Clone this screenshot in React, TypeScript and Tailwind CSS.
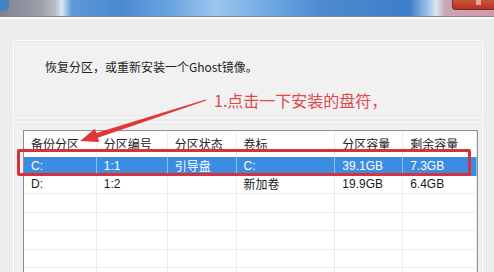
import React from "react";

const cols = [73, 71, 69, 99, 68, 74];
const headers = ["备份分区", "分区编号", "分区状态", "卷标", "分区容量", "剩余容量"];
const rows: string[][] = [
  ["C:", "1:1", "引导盘", "C:", "39.1GB", "7.3GB"],
  ["D:", "1:2", "", "新加卷", "19.9GB", "6.4GB"],
  ["", "", "", "", "", ""],
  ["", "", "", "", "", ""],
  ["", "", "", "", "", ""],
  ["", "", "", "", "", ""],
  ["", "", "", "", "", ""],
];

export default function App() {
  return (
    <div
      className="relative w-[494px] h-[272px] overflow-hidden bg-[#ededed] text-[#1a1a1a]"
      style={{ fontFamily: '"Liberation Sans", "Noto Sans CJK SC", sans-serif' }}
    >
      {/* title bar */}
      <div className="relative h-[17px] bg-[linear-gradient(90deg,#7e8290_0px,#9c9ea8_40px,#b8bcc6_55px,#d6e6f4_62px,#5d9ad8_72px,#4a88d0_120px,#6aa4e0_170px,#9cc6ee_215px,#74aee4_260px,#4d8ad0_320px,#3f7ec8_410px,#9cc4ea_428px,#dde8f2_436px,#c9a4b6_445px,#d09ab0_494px)] border-b border-[#7d8a9a]">
        <div className="absolute left-0 top-0 w-[9px] h-[11px] rounded-br-[6px] bg-[#3f83c8]" />
        <div className="absolute left-[452px] -top-[2px] w-[44px] h-[12px] rounded-[3px] border border-[#7a2a20] bg-[linear-gradient(180deg,#c85a40,#b8301e)]">
          <div className="absolute left-[23px] top-[1px] w-[5px] h-[5px] bg-[#f0d0c0] opacity-70" />
        </div>
      </div>
      <div className="h-[2px] bg-[#fbfbfb]" />

      {/* top panel */}
      <div className="mt-[21px] ml-[13px] w-[470px] h-[78px] border border-[#fdfdfd] bg-[#f1f1f1] shadow-[inset_0_0_0_1px_#e6e6e6] pl-[31px] pt-[18px]">
        <div className="text-[12px] leading-[16px] text-[#1e1e1e]" style={{ fontFamily: '"Noto Sans CJK SC", sans-serif' }}>
          恢复分区，或重新安装一个Ghost镜像。
        </div>
      </div>

      {/* table panel */}
      <div className="mt-[4px] ml-[13px] w-[470px] h-[200px] border border-[#fdfdfd] bg-[#f1f1f1] shadow-[inset_0_0_0_1px_#e6e6e6] pl-[9px] pt-[7px]">
        <div className="w-[455px] border border-[#8e8e8e] bg-white">
          <div className="flex h-[26px] items-center text-[12px]" style={{ fontFamily: '"Noto Sans CJK SC", sans-serif' }}>
            {headers.map((h, i) => (
              <div
                key={i}
                className="h-full flex items-center pl-[7px] border-r border-[#ececec] text-[#222]"
                style={{ width: cols[i] }}
              >
                {h}
              </div>
            ))}
          </div>
          {rows.map((r, ri) => (
            <div
              key={ri}
              className={
                ri === 0
                  ? "flex h-[18.5px] items-center bg-[#3b8de4] text-white text-[12px]"
                  : "flex h-[18.5px] items-center border-b border-[#ececec] text-[12px] text-[#1a1a1a]"
              }
            >
              {r.map((c, ci) => (
                <div
                  key={ci}
                  className={
                    ri === 0
                      ? "h-full flex items-center pl-[7px] border-r border-[#8cbcf0]"
                      : "h-full flex items-center pl-[7px] border-r border-[#ececec]"
                  }
                  style={{
                    width: cols[ci],
                    fontFamily: /[\u4e00-\u9fff]/.test(c)
                      ? '"Noto Sans CJK SC", sans-serif'
                      : '"Liberation Sans", sans-serif',
                  }}
                >
                  {c}
                </div>
              ))}
            </div>
          ))}
        </div>
      </div>

      {/* annotation text */}
      <div
        className="absolute left-[214px] top-[89px] text-[16px] leading-[22px] text-[#e2474c]"
        style={{ fontFamily: '"Noto Sans CJK SC", sans-serif' }}
      >
        1.点击一下安装的盘符，
      </div>

      {/* red arrow */}
      <svg className="absolute left-0 top-0" width="494" height="272" viewBox="0 0 494 272">
        <polygon
          points="205.8,99.4 96.3,133 94.9,128.8 80,141 99.3,142.1 97.9,137.8 206.2,100.6"
          fill="#e3353a"
        />
      </svg>

      {/* red highlight rectangle */}
      <div className="absolute left-[17px] top-[149px] w-[454px] h-[27px] rounded-[2px] border-[3px] border-[#d7323b]" />
    </div>
  );
}
